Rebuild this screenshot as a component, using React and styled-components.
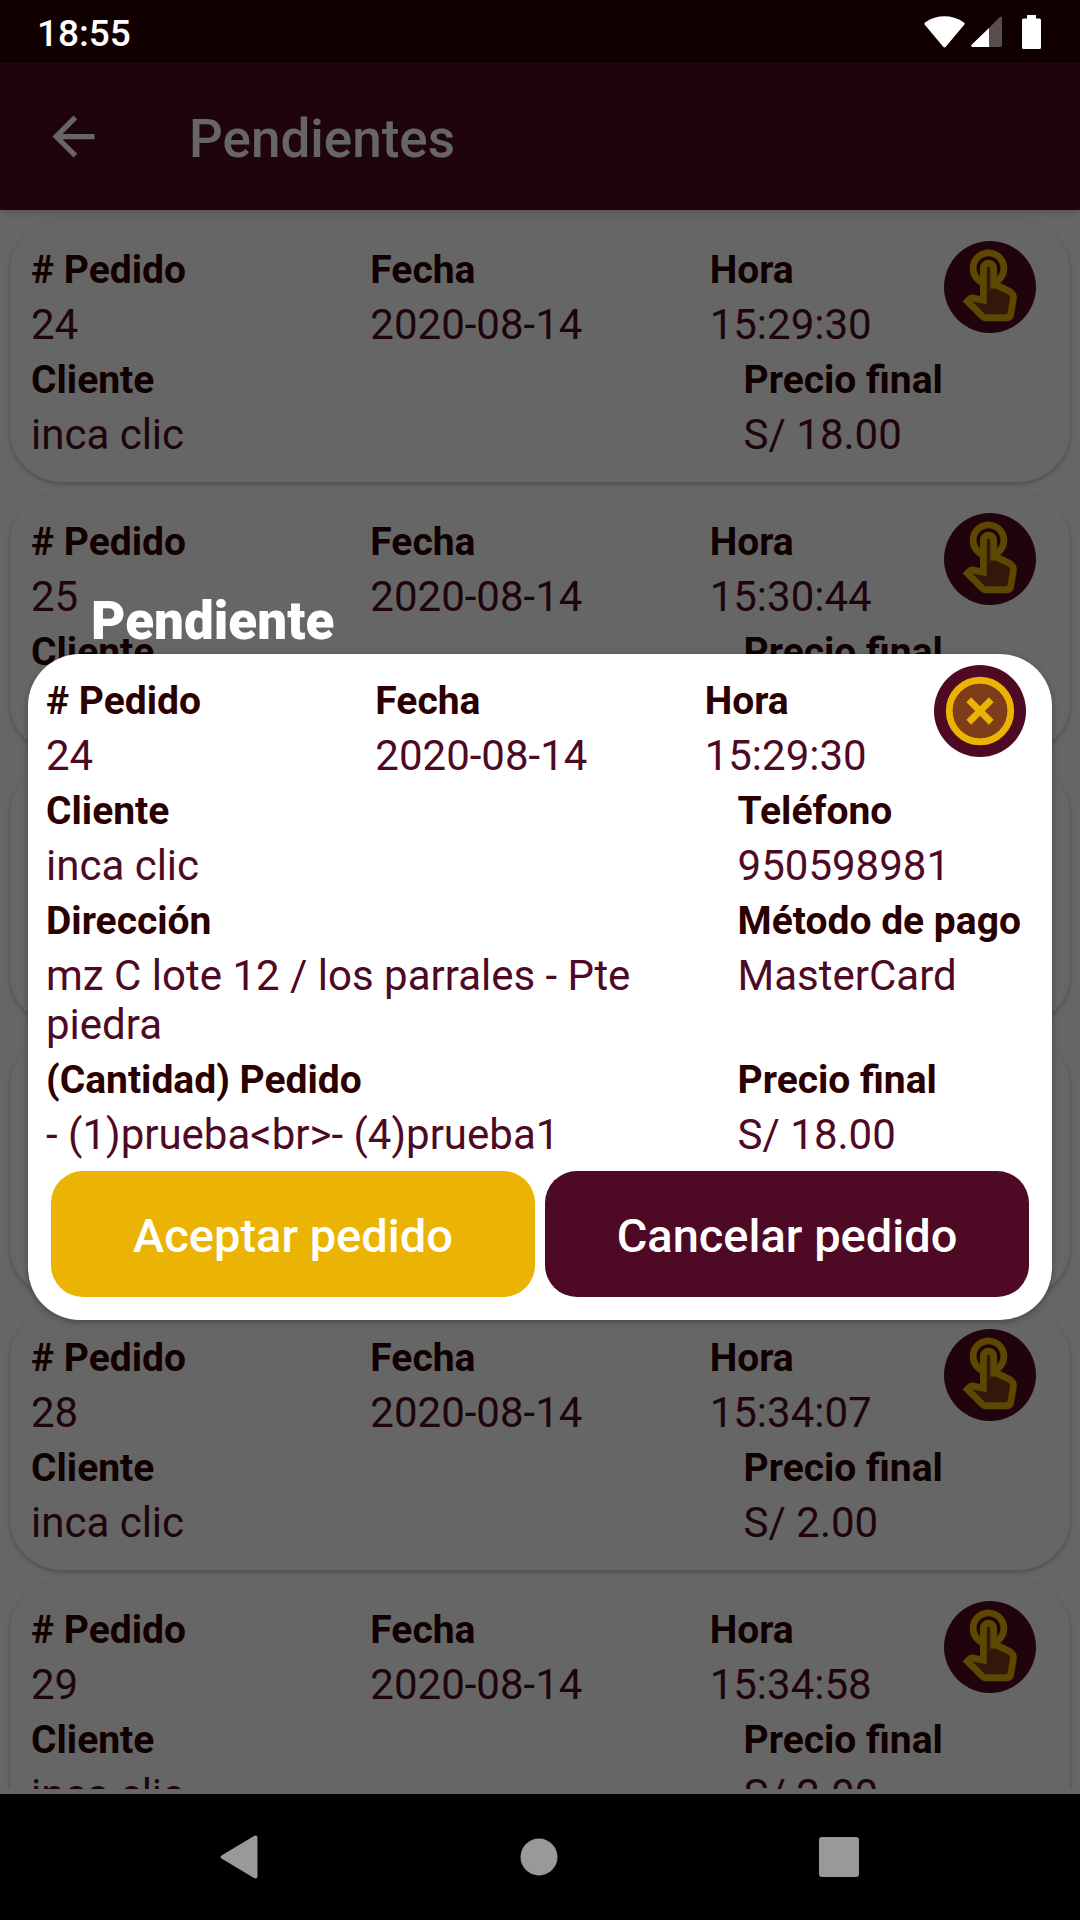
import React from "react";
import styled, { createGlobalStyle } from "styled-components";

const GlobalStyle = createGlobalStyle`
    * {
        box-sizing: border-box;
    }

    body {
        margin: 0;
        font-family: Roboto, "Liberation Sans", sans-serif;
    }

    button {
        padding: 0;
        border: 0;
        font-family: inherit;
        cursor: pointer;
    }

    svg {
        display: block;
    }
`;

const vino = "#4e0a24";
const vinoOscuro = "#2b0000";
const amarillo = "#ebb304";

const Screen = styled.div`
    position: relative;
    display: flex;
    flex-direction: column;
    height: 100vh;
    overflow: hidden;
    background-color: #fff;
`;

const StatusBar = styled.div`
    position: relative;
    z-index: 2;
    display: flex;
    flex-shrink: 0;
    align-items: center;
    justify-content: space-between;
    height: 63px;
    padding: 0 39px 0 37px;
    background-color: #110000;
    color: #fff;
`;

const Clock = styled.span`
    padding-top: 4px;
    font-size: 37px;
    line-height: 44px;
    font-weight: 500;
`;

const StatusIcons = styled.div`
    display: flex;
    align-items: center;
    gap: 6px;

    svg:last-child {
        margin-left: 14px;
    }
`;

const Header = styled.header`
    display: flex;
    flex-shrink: 0;
    align-items: center;
    gap: 84px;
    height: 147px;
    padding: 0 42px;
    background-color: ${vino};
    box-shadow: 0 2px 8px rgba(0, 0, 0, 0.2);
    color: #fff;
`;

const BackButton = styled.button`
    background: none;
    color: inherit;
`;

const HeaderTitle = styled.h1`
    margin: 0;
    padding-top: 4px;
    font-size: 53px;
    line-height: 62px;
    font-weight: 500;
`;

const Main = styled.main`
    display: flex;
    flex: 1;
    flex-direction: column;
    min-height: 0;
    padding-bottom: 5px;
`;

const OrderList = styled.div`
    display: flex;
    flex-direction: column;
    gap: 10px;
    padding: 10px;
    overflow: hidden;
`;

const Card = styled.article`
    display: flex;
    flex-direction: column;
    flex-shrink: 0;
    gap: 7px;
    padding: 21px 21px 23px;
    border-radius: 52px;
    background-color: #fff;
    box-shadow: 0 2px 5px rgba(0, 0, 0, 0.25);
`;

const TopRow = styled.div`
    display: grid;
    grid-template-columns: repeat(3, minmax(0, 1fr));
`;

const TopCell = styled.div`
    display: flex;
    align-items: flex-start;
    justify-content: space-between;
    padding-right: ${(props) => props.$right || 0}px;
`;

const WideRow = styled.div`
    display: grid;
    grid-template-columns: minmax(0, 7fr) minmax(0, 3fr);
`;

const FieldContainer = styled.div`
    display: flex;
    flex-direction: column;
    gap: 5px;
    padding-top: ${(props) => props.$top || 0}px;
`;

const Label = styled.span`
    font-size: 39px;
    line-height: 49px;
    font-weight: 700;
    color: ${vinoOscuro};
    white-space: nowrap;
`;

const Value = styled.span`
    font-size: 42px;
    line-height: 49px;
    color: ${vino};
`;

const RoundButton = styled.button`
    display: flex;
    flex-shrink: 0;
    align-items: center;
    justify-content: center;
    width: 92px;
    height: 92px;
    border-radius: 50%;
    background-color: ${vino};
    color: ${amarillo};
`;

const Overlay = styled.div`
    position: absolute;
    inset: 0;
    z-index: 1;
    display: flex;
    flex-direction: column;
    justify-content: center;
    padding: 0 28px 10px;
    background-color: rgba(0, 0, 0, 0.6);
`;

const ModalTitle = styled.h2`
    margin: 0 0 2px;
    padding-left: 63px;
    font-size: 53px;
    line-height: 62px;
    font-weight: 900;
    color: #fff;
`;

const Modal = styled.section`
    display: flex;
    flex-direction: column;
    gap: 7px;
    padding: 11px 18px 23px;
    border-radius: 52px;
    background-color: #fff;
    box-shadow: 0 2px 6px rgba(0, 0, 0, 0.3);
`;

const Actions = styled.div`
    display: flex;
    gap: 10px;
    padding: 5px 5px 0;
`;

const ActionButton = styled.button`
    flex: 1;
    height: 126px;
    padding-top: 2px;
    border-radius: 32px;
    background-color: ${(props) => props.$color};
    font-size: 47px;
    font-weight: 500;
    color: #fff;
`;

const NavBar = styled.nav`
    position: relative;
    z-index: 2;
    display: flex;
    flex-shrink: 0;
    height: 126px;
    padding: 0 91px 0 89px;
    background-color: #000;
`;

const NavButton = styled.button`
    display: flex;
    flex: 1;
    align-items: center;
    justify-content: center;
    background: none;
    color: #999;
`;

const WifiIcon = () => (
    <svg width="41" height="32" viewBox="0 0 41 32" fill="currentColor">
        <path d="M1.2 9.2Q-.6 7.6 1.4 6.2C13 -1.7 28 -1.7 39.6 6.2Q41.6 7.6 39.8 9.2L22 30.6Q20.5 32.4 19 30.6Z" />
    </svg>
);

const SignalIcon = () => (
    <svg width="31" height="31" viewBox="0 0 31 31" fill="currentColor">
        <path d="M18 12V31H1.4Q-.6 30.4 .6 28.8Z" />
        <path opacity="0.3" d="M18 12L29 .8Q31 -.4 31 2V29Q31 31 29 31H18Z" />
    </svg>
);

const BatteryIcon = () => (
    <svg width="19" height="34" viewBox="0 0 19 34" fill="currentColor">
        <path d="M5 0H14V3.5H17.5Q19 3.5 19 5V32.5Q19 34 17.5 34H1.5Q0 34 0 32.5V5Q0 3.5 1.5 3.5H5Z" />
    </svg>
);

const BackIcon = () => (
    <svg width="63" height="63" viewBox="0 0 24 24" fill="currentColor">
        <path d="M20 11H7.83l5.59-5.59L12 4l-8 8 8 8 1.41-1.41L7.83 13H20v-2z" />
    </svg>
);

const TouchIcon = () => (
    <svg width="82" height="82" viewBox="0 0 24 24" fill="currentColor">
        <path
            opacity="0.3"
            d="M17.29 14.23L13.83 12.5h-1.76v-6c0-.28-.22-.5-.5-.5s-.5.22-.5.5v10.74l-4.25-.89 3.68 3.68c.07.06.15.1.24.1h6.3l.8-4.71c.07-.5-.15-.99-.55-1.19z"
        />
        <path d="M18.19 12.44l-3.24-1.62c1.29-1 2.12-2.56 2.12-4.32 0-3.03-2.47-5.5-5.5-5.5s-5.5 2.47-5.5 5.5c0 2.13 1.22 3.98 3 4.89v3.26c-2.15-.46-2.02-.44-2.26-.44-.53 0-1.03.21-1.41.59L4 16.22l5.09 5.09c.43.44 1.03.69 1.65.69h6.3c.98 0 1.81-.7 1.97-1.67l.8-4.71c.22-1.3-.43-2.58-1.62-3.18zm-.35 2.85l-.8 4.71h-6.3c-.09 0-.17-.04-.24-.1l-3.68-3.68 4.25.89V6.5c0-.28.22-.5.5-.5s.5.22.5.5v6h1.76l3.46 1.73c.4.2.62.63.55 1.06zM8.07 6.5c0-1.93 1.57-3.5 3.5-3.5s3.5 1.57 3.5 3.5c0 .95-.38 1.81-1 2.44V6.5c0-1.38-1.12-2.5-2.5-2.5s-2.5 1.12-2.5 2.5v2.44c-.62-.63-1-1.49-1-2.44z" />
    </svg>
);

const CloseIcon = () => (
    <svg width="82" height="82" viewBox="0 0 24 24" fill="currentColor">
        <circle cx="12" cy="12" r="8" opacity="0.3" />
        <circle cx="12" cy="12" r="9" fill="none" stroke="currentColor" strokeWidth="2" />
        <path d="M14.59 8L12 10.59 9.41 8 8 9.41 10.59 12 8 14.59 9.41 16 12 13.41 14.59 16 16 14.59 13.41 12 16 9.41z" />
    </svg>
);

const pedidos = [
    { id: 24, fecha: "2020-08-14", hora: "15:29:30", cliente: "inca clic", precio: "18.00" },
    { id: 25, fecha: "2020-08-14", hora: "15:30:44", cliente: "inca clic", precio: "18.00" },
    { id: 26, fecha: "2020-08-14", hora: "15:31:20", cliente: "inca clic", precio: "18.00" },
    { id: 27, fecha: "2020-08-14", hora: "15:32:15", cliente: "inca clic", precio: "2.00" },
    { id: 28, fecha: "2020-08-14", hora: "15:34:07", cliente: "inca clic", precio: "2.00" },
    { id: 29, fecha: "2020-08-14", hora: "15:34:58", cliente: "inca clic", precio: "2.00" },
];

const Field = ({ label, value, top }) => (
    <FieldContainer $top={top}>
        <Label>{label}</Label>
        <Value>{value}</Value>
    </FieldContainer>
);

const OrderTop = ({ pedido, top, right, children }) => (
    <TopRow>
        <Field label="# Pedido" value={pedido.id} top={top} />
        <Field label="Fecha" value={pedido.fecha} top={top} />
        <TopCell $right={right}>
            <Field label="Hora" value={pedido.hora} top={top} />
            {children}
        </TopCell>
    </TopRow>
);

const OrderCard = ({ pedido }) => (
    <Card>
        <OrderTop pedido={pedido} top={5} right={13}>
            <RoundButton aria-label="Ver pedido">
                <TouchIcon />
            </RoundButton>
        </OrderTop>
        <WideRow>
            <Field label="Cliente" value={pedido.cliente} />
            <Field label="Precio final" value={`S/ ${pedido.precio}`} />
        </WideRow>
    </Card>
);

const OrderModal = ({ pedido }) => (
    <Overlay>
        <ModalTitle id="modal-title">Pendiente</ModalTitle>
        <Modal role="dialog" aria-modal="true" aria-labelledby="modal-title">
            <OrderTop pedido={pedido} top={12} right={8}>
                <RoundButton aria-label="Cerrar">
                    <CloseIcon />
                </RoundButton>
            </OrderTop>
            <WideRow>
                <Field label="Cliente" value={pedido.cliente} />
                <Field label="Teléfono" value="950598981" />
            </WideRow>
            <WideRow>
                <Field label="Dirección" value="mz C lote 12 / los parrales - Pte piedra" />
                <Field label="Método de pago" value="MasterCard" />
            </WideRow>
            <WideRow>
                <Field label="(Cantidad) Pedido" value="- (1)prueba<br>- (4)prueba1" />
                <Field label="Precio final" value={`S/ ${pedido.precio}`} />
            </WideRow>
            <Actions>
                <ActionButton $color={amarillo}>Aceptar pedido</ActionButton>
                <ActionButton $color={vino}>Cancelar pedido</ActionButton>
            </Actions>
        </Modal>
    </Overlay>
);

export default function App() {
    return (
        <Screen>
            <GlobalStyle />
            <StatusBar>
                <Clock>18:55</Clock>
                <StatusIcons>
                    <WifiIcon />
                    <SignalIcon />
                    <BatteryIcon />
                </StatusIcons>
            </StatusBar>

            <Header>
                <BackButton aria-label="Volver">
                    <BackIcon />
                </BackButton>
                <HeaderTitle>Pendientes</HeaderTitle>
            </Header>

            <Main>
                <OrderList>
                    {pedidos.map((pedido) => (
                        <OrderCard key={pedido.id} pedido={pedido} />
                    ))}
                </OrderList>
            </Main>

            <OrderModal pedido={pedidos[0]} />

            <NavBar>
                <NavButton aria-label="Atrás">
                    <svg width="38" height="44" viewBox="0 0 38 44" fill="currentColor">
                        <path d="M1.5 20.5L34 1Q37.5 -.5 37.5 3V41Q37.5 44.5 34 43L1.5 23.5Q-.5 22 1.5 20.5Z" />
                    </svg>
                </NavButton>
                <NavButton aria-label="Inicio">
                    <svg width="38" height="38" viewBox="0 0 38 38" fill="currentColor">
                        <circle cx="19" cy="19" r="18.5" />
                    </svg>
                </NavButton>
                <NavButton aria-label="Recientes">
                    <svg width="40" height="40" viewBox="0 0 40 40" fill="currentColor">
                        <rect width="40" height="40" rx="3" />
                    </svg>
                </NavButton>
            </NavBar>
        </Screen>
    );
}
